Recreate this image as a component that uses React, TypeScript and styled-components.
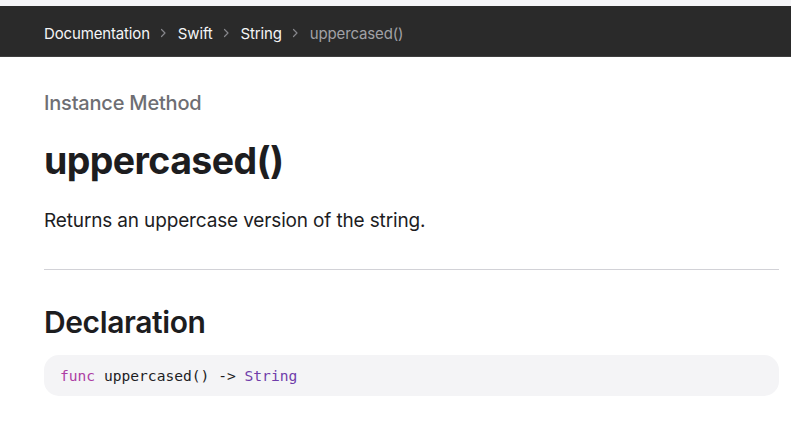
import styled, { createGlobalStyle } from 'styled-components';

const GlobalStyle = createGlobalStyle`
  html, body {
    margin: 0;
    padding: 0;
    background: #ffffff;
    font-family: Inter, 'Noto Sans', sans-serif;
    -webkit-font-smoothing: antialiased;
  }
`;

// --- Navegacao ---

const TopStrip = styled.div`
  height: 6px;
  background-color: #f5f5f7;
`;

const NavBar = styled.nav`
  height: 51px;
  box-sizing: border-box;
  padding: 4px 44px 0;
  background-color: #2a2a2a;
  border-bottom: 1px solid #3e3e3e;
  display: flex;
  align-items: center;
`;

const Crumbs = styled.ol`
  display: flex;
  align-items: center;
  list-style: none;
  margin: 0;
  padding: 0;
  gap: 10px;
`;

const Crumb = styled.li<{ current?: boolean }>`
  font-size: 15px;
  letter-spacing: -0.15px;
  color: ${({ current }) => (current ? '#a1a1a6' : '#f5f5f7')};
`;

const Chevron = styled.li`
  display: flex;
  align-items: center;
  color: #86868b;
  margin-right: 1px;
`;

// --- Conteudo ---

const Main = styled.main`
  padding: 34px 12px 0 44px;
`;

const Eyebrow = styled.div`
  font-size: 20px;
  line-height: 24px;
  font-weight: 500;
  color: #6e6e73;
  letter-spacing: -0.2px;
`;

const Title = styled.h1`
  margin: 24px 0 0;
  font-size: 37.5px;
  line-height: 44px;
  font-weight: 700;
  color: #1d1d1f;
  letter-spacing: -0.6px;
`;

const Abstract = styled.p`
  margin: 25px 0 0;
  font-size: 19px;
  line-height: 26px;
  color: #1d1d1f;
  letter-spacing: -0.15px;
`;

const Divider = styled.hr`
  margin: 35px 0 0;
  border: none;
  border-top: 1px solid #d2d2d7;
`;

const SectionTitle = styled.h2`
  margin: 34px 0 0;
  font-size: 30px;
  line-height: 36px;
  font-weight: 600;
  color: #1d1d1f;
  letter-spacing: -0.4px;
`;

const CodeBlock = styled.pre`
  margin: 15px 0 0;
  height: 41px;
  box-sizing: border-box;
  display: flex;
  align-items: center;
  padding: 0 16px;
  background-color: #f4f4f6;
  border-radius: 15px;
  font-family: 'DejaVu Sans Mono', 'Liberation Mono', monospace;
  font-size: 14.6px;
  color: #1d1d1f;
`;

const Token = styled.span<{ kind: 'keyword' | 'type' }>`
  color: ${({ kind }) => (kind === 'keyword' ? '#ad3da4' : '#703daa')};
`;

const ChevronIcon = () => (
  <svg width="7" height="10" viewBox="0 0 7 10" fill="none">
    <path d="M1.5 1.5 L5 5 L1.5 8.5" stroke="currentColor" strokeWidth="1.2" strokeLinecap="round" strokeLinejoin="round" />
  </svg>
);

const path = ['Documentation', 'Swift', 'String'];

export default function App() {
  return (
    <>
      <GlobalStyle />
      <TopStrip />
      <NavBar>
        <Crumbs>
          {path.flatMap(p => [
            <Crumb key={p}>{p}</Crumb>,
            <Chevron key={p + '-sep'}>
              <ChevronIcon />
            </Chevron>,
          ])}
          <Crumb current>uppercased()</Crumb>
        </Crumbs>
      </NavBar>
      <Main>
        <Eyebrow>Instance Method</Eyebrow>
        <Title>uppercased()</Title>
        <Abstract>Returns an uppercase version of the string.</Abstract>
        <Divider />
        <SectionTitle>Declaration</SectionTitle>
        <CodeBlock>
          <Token kind="keyword">func</Token> uppercased() -&gt; <Token kind="type">String</Token>
        </CodeBlock>
      </Main>
    </>
  );
}
